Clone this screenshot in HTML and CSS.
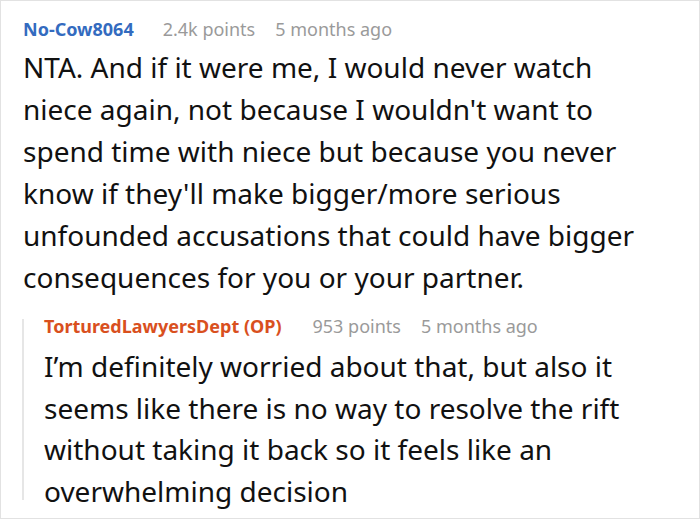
FILE: index.html
```html
<!DOCTYPE html>
<html>
<head>
<meta charset="utf-8">
<link rel="stylesheet" href="styles.css">
</head>
<body>
<div class="frame">
  <div class="comment">
    <div class="meta">
      <span class="user">No-Cow8064</span>
      <span class="points">2.4k points</span>
      <span class="time">5 months ago</span>
    </div>
    <p class="body">NTA. And if it were me, I would never watch niece again, not because I wouldn't want to spend time with niece but because you never know if they'll make bigger/more serious unfounded accusations that could have bigger consequences for you or your partner.</p>
    <div class="reply">
      <div class="meta reply-meta">
        <span class="user op">TorturedLawyersDept (OP)</span>
        <span class="points">953 points</span>
        <span class="time">5 months ago</span>
      </div>
      <p class="body reply-body">I’m definitely worried about that, but also it seems like there is no way to resolve the rift without taking it back so it feels like an overwhelming decision</p>
    </div>
  </div>
</div>
</body>
</html>
```

FILE: styles.css
```css
html, body {
  margin: 0;
  padding: 0;
  background: #fff;
}
.frame {
  width: 700px;
  height: 519px;
  box-sizing: border-box;
  border: 1px solid #e2e2e2;
  overflow: hidden;
  font-family: "Noto Sans", sans-serif;
  color: #111;
}
.comment {
  padding: 16px 0 0 22px;
}
.meta {
  display: flex;
  font-size: 18px;
  line-height: 24px;
  white-space: nowrap;
}
.user {
  font-weight: bold;
  color: #336bbf;
  margin-right: 29px;
}
.user.op {
  color: #d9501e;
  margin-right: 31px;
}
.points {
  color: #9a9a9a;
  margin-right: 20px;
}
.time {
  color: #9a9a9a;
}
.body {
  margin: 0;
  font-size: 28px;
  line-height: 42px;
  width: 625px;
  padding-top: 5px;
}
.reply {
  margin-top: 21px;
  margin-left: -1px;
  padding-left: 22px;
  background: linear-gradient(#e6e6e6, #e6e6e6) no-repeat 0 0 / 2px calc(100% - 12px);
}
.reply-meta {
  line-height: 14px;
}
.reply-body {
  width: 600px;
  line-height: 41.5px;
  padding-top: 13px;
}
```
